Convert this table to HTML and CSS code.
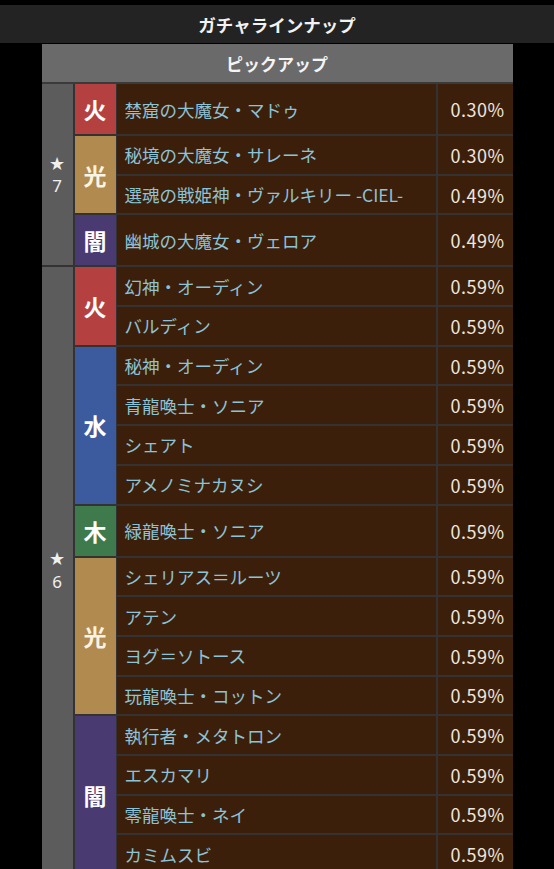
FILE: index.html
```html
<!DOCTYPE html>
<html lang="ja">
<head>
<meta charset="utf-8">
<title>ガチャラインナップ</title>
<link rel="stylesheet" href="styles.css">
</head>
<body>
<header class="title-bar">ガチャラインナップ</header>
<section class="lineup">
  <div class="pickup-head">ピックアップ</div>
  <div class="table">
    <div class="star-group">
      <div class="star-cell"><span class="star">★</span><span class="num">7</span></div>
      <div class="elems">
        <div class="elem-group">
          <div class="elem fire">火</div>
          <div class="rows">
            <div class="row tall"><span class="name">禁窟の大魔女・マドゥ</span><span class="rate">0.30%</span></div>
          </div>
        </div>
        <div class="elem-group">
          <div class="elem light">光</div>
          <div class="rows">
            <div class="row"><span class="name">秘境の大魔女・サレーネ</span><span class="rate">0.30%</span></div>
            <div class="row"><span class="name">選魂の戦姫神・ヴァルキリー -CIEL-</span><span class="rate">0.49%</span></div>
          </div>
        </div>
        <div class="elem-group">
          <div class="elem dark">闇</div>
          <div class="rows">
            <div class="row tall"><span class="name">幽城の大魔女・ヴェロア</span><span class="rate">0.49%</span></div>
          </div>
        </div>
      </div>
    </div>
    <div class="star-group">
      <div class="star-cell"><span class="star">★</span><span class="num">6</span></div>
      <div class="elems">
        <div class="elem-group">
          <div class="elem fire">火</div>
          <div class="rows">
            <div class="row"><span class="name">幻神・オーディン</span><span class="rate">0.59%</span></div>
            <div class="row"><span class="name">バルディン</span><span class="rate">0.59%</span></div>
          </div>
        </div>
        <div class="elem-group">
          <div class="elem water">水</div>
          <div class="rows">
            <div class="row"><span class="name">秘神・オーディン</span><span class="rate">0.59%</span></div>
            <div class="row"><span class="name">青龍喚士・ソニア</span><span class="rate">0.59%</span></div>
            <div class="row"><span class="name">シェアト</span><span class="rate">0.59%</span></div>
            <div class="row"><span class="name">アメノミナカヌシ</span><span class="rate">0.59%</span></div>
          </div>
        </div>
        <div class="elem-group">
          <div class="elem wood">木</div>
          <div class="rows">
            <div class="row tall"><span class="name">緑龍喚士・ソニア</span><span class="rate">0.59%</span></div>
          </div>
        </div>
        <div class="elem-group">
          <div class="elem light">光</div>
          <div class="rows">
            <div class="row"><span class="name">シェリアス＝ルーツ</span><span class="rate">0.59%</span></div>
            <div class="row"><span class="name">アテン</span><span class="rate">0.59%</span></div>
            <div class="row"><span class="name">ヨグ＝ソトース</span><span class="rate">0.59%</span></div>
            <div class="row"><span class="name">玩龍喚士・コットン</span><span class="rate">0.59%</span></div>
          </div>
        </div>
        <div class="elem-group">
          <div class="elem dark">闇</div>
          <div class="rows">
            <div class="row"><span class="name">執行者・メタトロン</span><span class="rate">0.59%</span></div>
            <div class="row"><span class="name">エスカマリ</span><span class="rate">0.59%</span></div>
            <div class="row"><span class="name">零龍喚士・ネイ</span><span class="rate">0.59%</span></div>
            <div class="row"><span class="name">カミムスビ</span><span class="rate">0.59%</span></div>
          </div>
        </div>
      </div>
    </div>
  </div>
</section>
</body>
</html>
```

FILE: styles.css
```css
html, body {
  margin: 0;
  padding: 0;
  background: #000;
}
body {
  font-family: "Noto Sans CJK JP", "Noto Sans", sans-serif;
  color: #fff;
  padding-top: 5px;
  height: 864px;
  overflow: hidden;
}
.title-bar {
  height: 38px;
  background: #232323;
  display: flex;
  align-items: center;
  justify-content: center;
  font-size: 17.5px;
  font-weight: 700;
  color: #f2f2f2;
}
.lineup {
  width: 471px;
  margin: 1px auto 0;
}
.pickup-head {
  height: 38px;
  background: #6a6a6a;
  border-bottom: 2px solid #3a3a3a;
  display: flex;
  align-items: center;
  justify-content: center;
  font-size: 17px;
  font-weight: 700;
  color: #f4f4f4;
}
.table {
  display: flex;
  flex-direction: column;
  gap: 2px;
  background: #343232;
}
.star-group {
  display: flex;
  gap: 2px;
}
.star-cell {
  width: 31px;
  flex: none;
  background: #5c5c5c;
  display: flex;
  flex-direction: column;
  align-items: center;
  justify-content: center;
  color: #f0f0f0;
  line-height: 1.3;
}
.star {
  font-size: 18px;
  font-family: "DejaVu Sans", sans-serif;
}
.num {
  font-size: 17px;
  font-family: "Noto Sans", sans-serif;
}
.elems {
  flex: 1;
  display: flex;
  flex-direction: column;
  gap: 2px;
}
.elem-group {
  display: flex;
  gap: 1px;
}
.elem {
  width: 41px;
  flex: none;
  display: flex;
  align-items: center;
  justify-content: center;
  font-size: 23px;
  font-weight: 700;
  color: #fff;
}
.fire { background: #b4413f; }
.light { background: #b08a4e; color: #fbf3e2; }
.dark { background: #4a3a72; }
.water { background: #3c5a9e; }
.wood { background: #3f7a4c; }
.rows {
  flex: 1;
  display: flex;
  flex-direction: column;
  gap: 2px;
}
.row {
  height: 37.7px;
  display: grid;
  grid-template-columns: 1fr 75px;
  gap: 2px;
}
.row.tall {
  height: 50px;
}
.name, .rate {
  background: #3c1f0b;
  display: flex;
  align-items: center;
  white-space: nowrap;
}
.name {
  padding-left: 8px;
  font-size: 17.5px;
  color: #8cc3d6;
}
.rate {
  justify-content: flex-end;
  padding-right: 8px;
  font-size: 18px;
  letter-spacing: 0.5px;
  color: #f0e6dc;
}
```
